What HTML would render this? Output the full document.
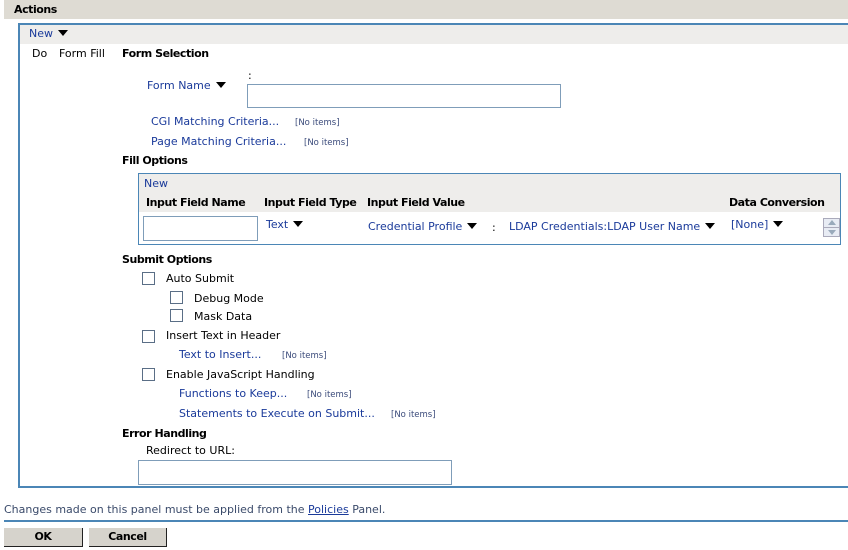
<!DOCTYPE html>
<html><head><style>
body{margin:0;width:848px;height:550px;background:#fff;font-family:"DejaVu Sans","Liberation Sans",sans-serif;font-size:11px;color:#000;position:relative;overflow:hidden}
.a{position:absolute;white-space:nowrap;line-height:14px}
.b{font-weight:bold;letter-spacing:-0.45px}
.l{color:#1a3a9a}
.n{font-size:8.5px;color:#3a4a7a}
.t{display:inline-block;width:0;height:0;border-left:5px solid transparent;border-right:5px solid transparent;border-top:6px solid #000;margin-left:5px;vertical-align:1px}
.cb{position:absolute;width:11px;height:11px;border:1px solid #5a6e86;background:#fff}
.in{position:absolute;border:1px solid #7f9db9;background:#fff}
</style></head><body>
<div style="position:absolute;left:4px;top:0;width:844px;height:19px;background:#dedbd3"></div>
<div class="a b" style="left:14px;top:3px">Actions</div>
<div style="position:absolute;left:18px;top:23px;width:840px;height:461px;border:2px solid #4b86b6;border-right:none"></div>
<div style="position:absolute;left:20px;top:25px;width:828px;height:19px;background:#eeedeb"></div>
<div class="a l" style="left:29px;top:27px">New<span class="t"></span></div>
<div class="a" style="left:32px;top:47px">Do</div>
<div class="a" style="left:59px;top:47px">Form Fill</div>
<div class="a b" style="left:122px;top:47px">Form Selection</div>
<div class="a" style="left:248px;top:69px">:</div>
<div class="a l" style="left:147px;top:79px">Form Name<span class="t"></span></div>
<div class="in" style="left:247px;top:84px;width:312px;height:22px"></div>
<div class="a l" style="left:151px;top:115px">CGI Matching Criteria...</div>
<div class="a n" style="left:295px;top:116px">[No items]</div>
<div class="a l" style="left:151px;top:135px">Page Matching Criteria...</div>
<div class="a n" style="left:304px;top:136px">[No items]</div>
<div class="a b" style="left:122px;top:154px">Fill Options</div>
<div style="position:absolute;left:138px;top:173px;width:701px;height:70px;border:1px solid #4b86b6"></div>
<div style="position:absolute;left:139px;top:174px;width:701px;height:38px;background:#eeedeb"></div>
<div class="a l" style="left:144px;top:177px">New</div>
<div class="a b" style="left:146px;top:196px">Input Field Name</div>
<div class="a b" style="left:264px;top:196px">Input Field Type</div>
<div class="a b" style="left:367px;top:196px">Input Field Value</div>
<div class="a b" style="left:729px;top:196px">Data Conversion</div>
<div class="in" style="left:143px;top:216px;width:113px;height:23px"></div>
<div class="a l" style="left:266px;top:218px">Text<span class="t"></span></div>
<div class="a l" style="left:368px;top:220px">Credential Profile<span class="t"></span></div>
<div class="a" style="left:492px;top:221px">:</div>
<div class="a l" style="left:509px;top:220px">LDAP Credentials:LDAP User Name<span class="t"></span></div>
<div class="a l" style="left:731px;top:218px">[None]<span class="t"></span></div>
<div style="position:absolute;left:823px;top:218px;width:15px;height:8px;border:1px solid #aab;background:#e8ecf4"><div style="margin:1px auto 0;width:0;height:0;border-left:4px solid transparent;border-right:4px solid transparent;border-bottom:5px solid #9ab"></div></div>
<div style="position:absolute;left:823px;top:227px;width:15px;height:8px;border:1px solid #aab;background:#e8ecf4"><div style="margin:2px auto 0;width:0;height:0;border-left:4px solid transparent;border-right:4px solid transparent;border-top:5px solid #9ab"></div></div>
<div class="a b" style="left:122px;top:253px">Submit Options</div>
<div class="cb" style="left:142px;top:272px"></div><div class="a" style="left:166px;top:272px">Auto Submit</div>
<div class="cb" style="left:170px;top:291px"></div><div class="a" style="left:194px;top:292px">Debug Mode</div>
<div class="cb" style="left:170px;top:309px"></div><div class="a" style="left:194px;top:310px">Mask Data</div>
<div class="cb" style="left:142px;top:330px"></div><div class="a" style="left:166px;top:329px">Insert Text in Header</div>
<div class="a l" style="left:179px;top:348px">Text to Insert...</div><div class="a n" style="left:282px;top:349px">[No items]</div>
<div class="cb" style="left:142px;top:368px"></div><div class="a" style="left:166px;top:368px">Enable JavaScript Handling</div>
<div class="a l" style="left:179px;top:387px">Functions to Keep...</div><div class="a n" style="left:307px;top:388px">[No items]</div>
<div class="a l" style="left:179px;top:407px">Statements to Execute on Submit...</div><div class="a n" style="left:391px;top:408px">[No items]</div>
<div class="a b" style="left:122px;top:427px">Error Handling</div>
<div class="a" style="left:146px;top:444px">Redirect to URL:</div>
<div class="in" style="left:138px;top:460px;width:312px;height:23px"></div>
<div class="a" style="left:4px;top:503px;color:#3a4a6a">Changes made on this panel must be applied from the <span style="color:#1a3a9a;text-decoration:underline">Policies</span> Panel.</div>
<div style="position:absolute;left:4px;top:520px;width:844px;height:2px;background:#4b86b6"></div>
<div class="a b" style="left:4px;top:528px;width:78px;height:18px;line-height:18px;text-align:center;background:#d6d3cc;border-right:1px solid #222;border-bottom:1px solid #222">OK</div>
<div class="a b" style="left:89px;top:528px;width:77px;height:18px;line-height:18px;text-align:center;background:#d6d3cc;border-right:1px solid #222;border-bottom:1px solid #222">Cancel</div>
</body></html>
